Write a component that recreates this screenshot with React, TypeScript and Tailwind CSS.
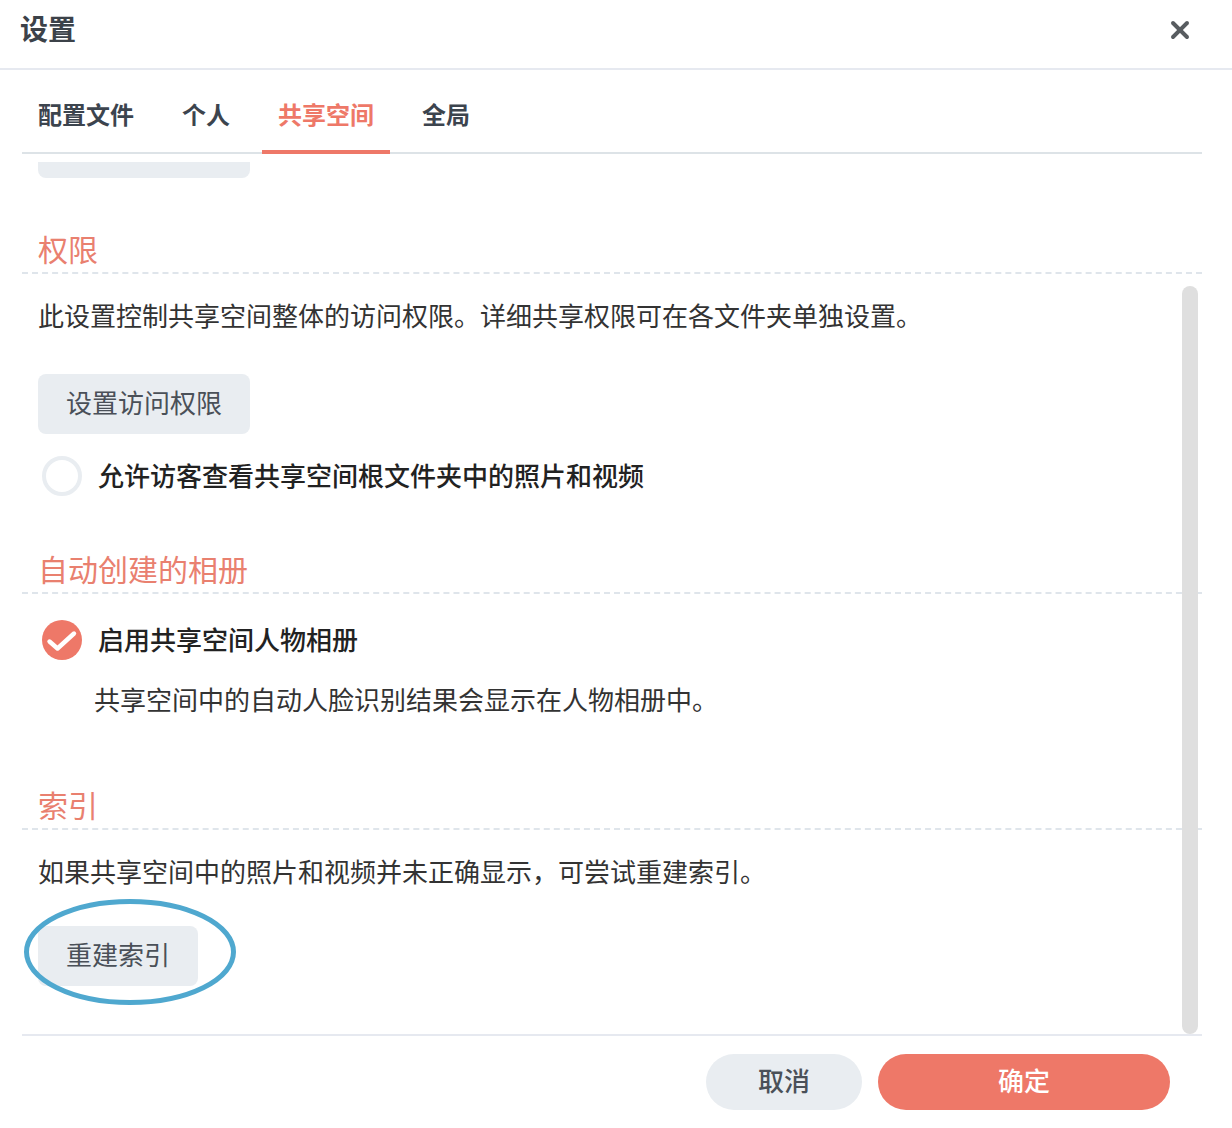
import { X } from "lucide-react";

const tabs = ["配置文件", "个人", "共享空间", "全局"];
const font = "[font-family:'Noto_Sans_CJK_SC','Noto_Sans',sans-serif]";

function SectionTitle({ children, className }: { children: string; className: string }) {
  return (
    <div className={`border-b-2 border-dashed border-[#dfe5eb] px-4 text-[30px] leading-[40px] text-[#e9806f] ${className}`}>
      {children}
    </div>
  );
}

export default function App() {
  return (
    <div className={`flex h-[1128px] w-[1232px] flex-col overflow-hidden bg-white ${font}`}>
      <header className="flex h-[70px] shrink-0 items-center justify-between border-b-2 border-[#e6e9f0] pr-[38px] pb-2 pl-[20px]">
        <h1 className="pb-[4px] text-[28px] leading-[60px] font-semibold text-[#3c4249]">设置</h1>
        <X className="size-[28px] text-[#585c60]" strokeWidth={3.4} />
      </header>

      <nav className="mr-[30px] ml-[22px] flex h-[84px] shrink-0 gap-4 border-b-2 border-[#dde3e7]">
        {tabs.map((tab) => (
          <div
            key={tab}
            className={
              tab === "共享空间"
                ? "-mb-[2px] flex h-[84px] items-center border-b-4 border-[#ee7868] px-4 pt-[8px] text-[24px] font-semibold text-[#ee7868]"
                : "flex h-[84px] items-center px-4 pt-[4px] text-[24px] font-semibold text-[#3c444e]"
            }
          >
            {tab}
          </div>
        ))}
      </nav>

      <main className="relative mr-[30px] ml-[22px] h-[880px] shrink-0 overflow-hidden text-[26px] text-[#333]">
        <div className="mt-2 ml-4 h-4 w-[212px] rounded-b-lg bg-[#e9edf1]" />

        <SectionTitle className="mt-[50px] h-[46px]">权限</SectionTitle>
        <p className="mt-[20px] px-4 leading-[42px]">此设置控制共享空间整体的访问权限。详细共享权限可在各文件夹单独设置。</p>
        <button className="mt-[38px] ml-4 block h-[60px] w-[212px] rounded-lg bg-[#e9edf1] pb-[6px] text-center text-[#4a5058]">设置访问权限</button>
        <label className="mt-[22px] ml-5 flex h-10 items-center gap-4">
          <span className="size-10 rounded-full border-4 border-[#e9edf1]" />
          <span className="pb-[4px] font-medium text-[#222]">允许访客查看共享空间根文件夹中的照片和视频</span>
        </label>

        <SectionTitle className="mt-[52px] h-[46px]">自动创建的相册</SectionTitle>
        <label className="mt-[26px] ml-5 flex h-10 items-center gap-4">
          <span className="flex size-10 items-center justify-center rounded-full bg-[#ee7868]">
            <svg viewBox="0 0 40 40" className="size-10" fill="none">
              <path d="M7.5 21.5L15.5 28.5L32 13.5" stroke="#fff" strokeWidth="4.4" strokeLinecap="round" strokeLinejoin="round" />
            </svg>
          </span>
          <span className="pb-[4px] font-medium text-[#222]">启用共享空间人物相册</span>
        </label>
        <p className="mt-[18px] pl-[72px] leading-[42px]">共享空间中的自动人脸识别结果会显示在人物相册中。</p>

        <SectionTitle className="mt-[64px] h-[46px]">索引</SectionTitle>
        <p className="mt-[20px] px-4 leading-[42px]">如果共享空间中的照片和视频并未正确显示，可尝试重建索引。</p>
        <button className="mt-[34px] ml-4 block h-[60px] w-[160px] rounded-lg bg-[#e9edf1] pb-[6px] text-center text-[#4a5058]">重建索引</button>

        <div className="absolute top-[132px] right-[4px] bottom-0 w-4 rounded-full bg-[#dfdfdf]" />
        <svg className="absolute top-[745px] left-0" width="220" height="110" viewBox="0 0 220 110" fill="none">
          <ellipse cx="108" cy="53" rx="103.5" ry="50.5" stroke="#4fa8cf" strokeWidth="5" />
        </svg>
      </main>

      <footer className="mr-[30px] ml-[22px] flex h-[94px] shrink-0 items-start justify-end gap-4 border-t-2 border-[#e6e9f0] pt-[18px] pr-8 text-[26px]">
        <button className="h-14 w-[156px] rounded-full bg-[#e9edf1] pb-[6px] font-medium text-[#4a5058]">取消</button>
        <button className="h-14 w-[292px] rounded-full bg-[#ee7868] pb-[6px] font-medium text-white">确定</button>
      </footer>
    </div>
  );
}
